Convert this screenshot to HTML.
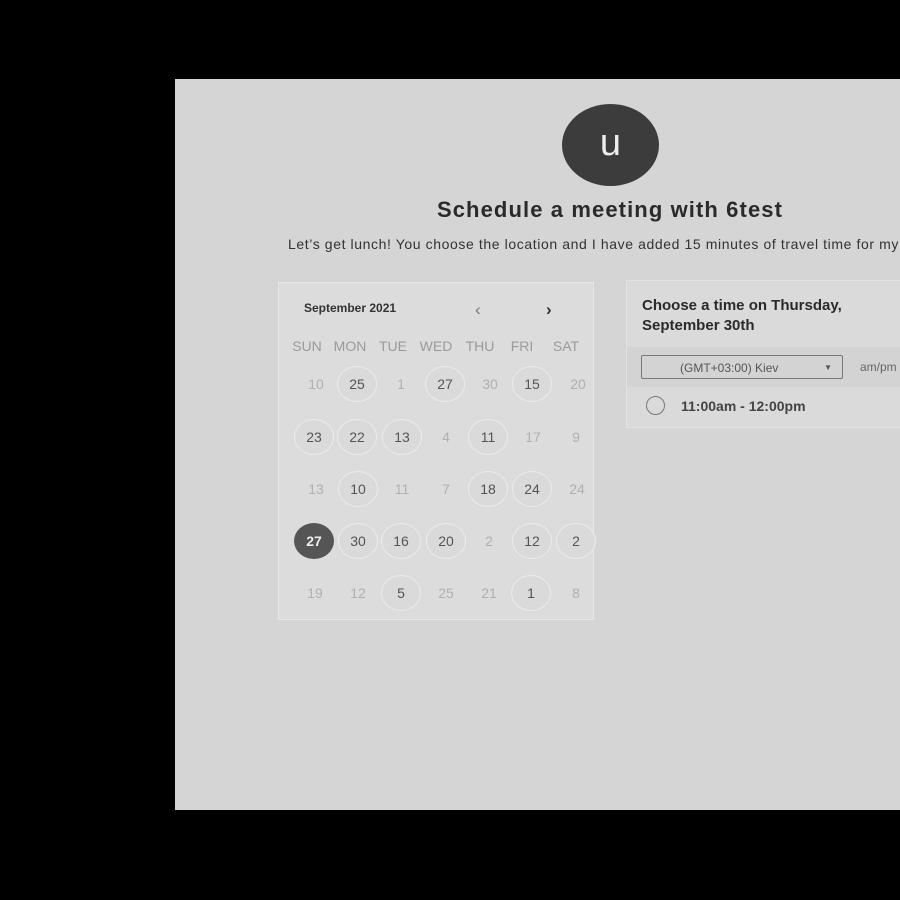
<!DOCTYPE html>
<html><head><style>
body{margin:0;width:900px;height:900px;background:#000;position:relative;overflow:hidden;font-family:"Liberation Sans",Arial,sans-serif;}
.page{position:absolute;left:175px;top:79px;width:725px;height:731px;background:#d5d5d5;}
.av{position:absolute;left:562px;top:104px;width:97px;height:82px;border-radius:50%;background:#3c3c3c;color:#eee;font-size:38px;text-align:center;line-height:78px;}
.t{position:absolute;left:0;width:1220px;text-align:center;top:197px;font-weight:bold;font-size:22px;letter-spacing:1.1px;color:#2a2a2a;}
.sub{position:absolute;left:288px;top:236px;font-size:14px;letter-spacing:0.6px;color:#333;white-space:nowrap;}
.cal{position:absolute;left:278px;top:282px;width:316px;height:338px;background:#dcdcdc;border:1px solid #e6e6e6;box-sizing:border-box;}
.abs{position:absolute;}
.d{position:absolute;width:40px;height:36px;margin-left:-20px;margin-top:-18px;line-height:36px;text-align:center;font-size:14px;color:#b0b0b0;border-radius:50%;}
.c{color:#555;background:#dadada;border:1px solid #ececec;box-sizing:border-box;line-height:34px;}
.k{background:#555;color:#eee;font-weight:bold;}
.h{position:absolute;top:338px;font-size:14px;color:#9a9a9a;width:40px;margin-left:-20px;text-align:center;}
.rp{position:absolute;left:626px;top:280px;width:280px;height:146px;background:#dadada;border:1px solid #e2e2e2;}
</style></head><body>
<div class="page"></div>
<div class="av">u</div>
<div class="t">Schedule a meeting with 6test</div>
<div class="sub">Let’s get lunch! You choose the location and I have added 15 minutes of travel time for my</div>
<div class="cal"></div>
<div class="abs" style="left:304px;top:301px;font-size:12px;font-weight:bold;color:#333">September 2021</div>
<div class="abs" style="left:475px;top:300px;font-size:17px;color:#777">&lsaquo;</div>
<div class="abs" style="left:546px;top:300px;font-size:17px;color:#333;font-weight:bold">&rsaquo;</div>
<div class="h" style="left:307px">SUN</div><div class="h" style="left:350px">MON</div><div class="h" style="left:393px">TUE</div><div class="h" style="left:436px">WED</div><div class="h" style="left:480px">THU</div><div class="h" style="left:522px">FRI</div><div class="h" style="left:566px">SAT</div>
<div class="d" style="left:316px;top:384px">10</div><div class="d c" style="left:357px;top:384px">25</div><div class="d" style="left:401px;top:384px">1</div><div class="d c" style="left:445px;top:384px">27</div><div class="d" style="left:490px;top:384px">30</div><div class="d c" style="left:532px;top:384px">15</div><div class="d" style="left:578px;top:384px">20</div>
<div class="d c" style="left:314px;top:437px">23</div><div class="d c" style="left:357px;top:437px">22</div><div class="d c" style="left:402px;top:437px">13</div><div class="d" style="left:446px;top:437px">4</div><div class="d c" style="left:488px;top:437px">11</div><div class="d" style="left:533px;top:437px">17</div><div class="d" style="left:576px;top:437px">9</div>
<div class="d" style="left:316px;top:489px">13</div><div class="d c" style="left:358px;top:489px">10</div><div class="d" style="left:402px;top:489px">11</div><div class="d" style="left:446px;top:489px">7</div><div class="d c" style="left:488px;top:489px">18</div><div class="d c" style="left:532px;top:489px">24</div><div class="d" style="left:577px;top:489px">24</div>
<div class="d k" style="left:314px;top:541px">27</div><div class="d c" style="left:358px;top:541px">30</div><div class="d c" style="left:401px;top:541px">16</div><div class="d c" style="left:446px;top:541px">20</div><div class="d" style="left:489px;top:541px">2</div><div class="d c" style="left:532px;top:541px">12</div><div class="d c" style="left:576px;top:541px">2</div>
<div class="d" style="left:315px;top:593px">19</div><div class="d" style="left:358px;top:593px">12</div><div class="d c" style="left:401px;top:593px">5</div><div class="d" style="left:446px;top:593px">25</div><div class="d" style="left:489px;top:593px">21</div><div class="d c" style="left:531px;top:593px">1</div><div class="d" style="left:576px;top:593px">8</div>
<div class="rp"></div>
<div class="abs" style="left:627px;top:347px;width:280px;height:40px;background:#d3d3d3"></div>
<div class="abs" style="left:642px;top:296px;font-size:15px;font-weight:bold;color:#2a2a2a;line-height:20px">Choose a time on Thursday,<br>September 30th</div>
<div class="abs" style="left:641px;top:355px;width:202px;height:24px;border:1px solid #777;border-radius:2px;font-size:12px;color:#555;line-height:24px;box-sizing:border-box;padding-left:38px">(GMT+03:00) Kiev<span style="position:absolute;right:10px;font-size:8px">&#9660;</span></div>
<div class="abs" style="left:860px;top:360px;font-size:12px;color:#666">am/pm</div>
<div class="abs" style="left:646px;top:396px;width:19px;height:19px;border:1.5px solid #777;border-radius:50%;box-sizing:border-box"></div>
<div class="abs" style="left:681px;top:398px;font-size:14px;font-weight:bold;color:#444">11:00am - 12:00pm</div>
</body></html>
